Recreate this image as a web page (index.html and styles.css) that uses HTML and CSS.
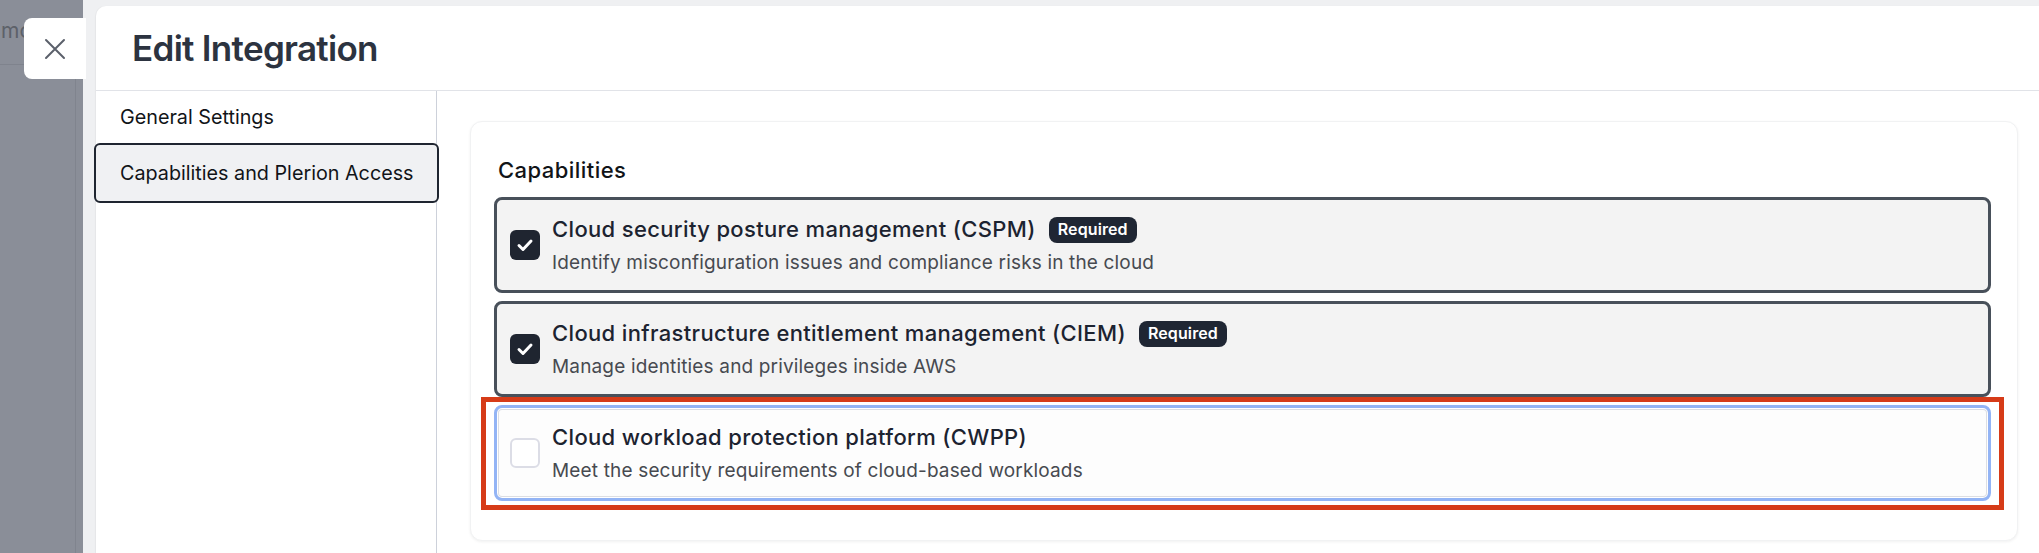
FILE: index.html
```html
<!DOCTYPE html>
<html lang="en">
<head>
<meta charset="utf-8">
<title>Edit Integration</title>
<link rel="stylesheet" href="styles.css">
</head>
<body>
<div class="screen">
  <div class="backdrop">
    <div class="backdrop-top"><span class="peek">mo</span></div>
    <div class="backdrop-body"></div>
    <button class="close-btn" aria-label="Close">
      <svg width="22" height="22" viewBox="0 0 22 22"><path d="M2 2 L20 20 M20 2 L2 20" stroke="#5b606b" stroke-width="2" stroke-linecap="round" fill="none"/></svg>
    </button>
  </div>
  <div class="sheet">
    <div class="panel">
      <header class="panel-header">
        <h1 class="panel-title">Edit Integration</h1>
      </header>
      <div class="panel-body">
        <nav class="side-nav">
          <div class="nav-item">General Settings</div>
          <div class="nav-item nav-item-active">Capabilities and Plerion Access</div>
        </nav>
        <main class="content">
          <section class="card">
            <h2 class="card-title">Capabilities</h2>
            <div class="cap-list">
              <div class="cap cap-checked">
                <span class="checkbox checkbox-on">
                  <svg width="30" height="30" viewBox="0 0 30 30"><path d="M9 15.5 L13 19.5 L21 11" stroke="#fff" stroke-width="3" stroke-linecap="round" stroke-linejoin="round" fill="none"/></svg>
                </span>
                <div class="cap-text">
                  <div class="cap-name">Cloud security posture management (CSPM) <span class="badge">Required</span></div>
                  <div class="cap-desc">Identify misconfiguration issues and compliance risks in the cloud</div>
                </div>
              </div>
              <div class="cap cap-checked">
                <span class="checkbox checkbox-on">
                  <svg width="30" height="30" viewBox="0 0 30 30"><path d="M9 15.5 L13 19.5 L21 11" stroke="#fff" stroke-width="3" stroke-linecap="round" stroke-linejoin="round" fill="none"/></svg>
                </span>
                <div class="cap-text">
                  <div class="cap-name">Cloud infrastructure entitlement management (CIEM) <span class="badge">Required</span></div>
                  <div class="cap-desc">Manage identities and privileges inside AWS</div>
                </div>
              </div>
              <div class="cap cap-focus">
                <span class="checkbox"></span>
                <div class="cap-text">
                  <div class="cap-name">Cloud workload protection platform (CWPP)</div>
                  <div class="cap-desc">Meet the security requirements of cloud-based workloads</div>
                </div>
                <span class="highlight"></span>
              </div>
            </div>
          </section>
        </main>
      </div>
    </div>
  </div>
</div>
</body>
</html>
```
FILE: styles.css
```css
* { box-sizing: border-box; }
html, body { margin: 0; padding: 0; }
body {
  width: 2039px;
  height: 553px;
  overflow: hidden;
  font-family: Inter, "Liberation Sans", sans-serif;
  background: #eff0f2;
}
.screen {
  display: flex;
  width: 2039px;
  height: 553px;
}
.backdrop {
  position: relative;
  width: 83px;
  flex: none;
  background: #8a8e98;
  display: flex;
  flex-direction: column;
}
.backdrop-top {
  height: 65px;
  border-bottom: 1px solid #7f838d;
  width: 75px;
  overflow: hidden;
  white-space: nowrap;
}
.peek {
  display: block;
  margin: 19px 0 0 1px;
  font-size: 21px;
  line-height: 24px;
  color: #5d6169;
}
.backdrop-body {
  flex: 1;
  width: 76px;
  border-right: 1px solid #80848e;
}
.close-btn {
  position: absolute;
  left: 24px;
  top: 18px;
  width: 62px;
  height: 61px;
  border: 0;
  padding: 0;
  background: #ffffff;
  border-radius: 8px 0 0 8px;
  display: flex;
  align-items: center;
  justify-content: center;
  z-index: 2;
}
.sheet {
  flex: 1;
  padding: 6px 0 0 13px;
  display: flex;
}
.panel {
  flex: 1;
  background: #ffffff;
  border-top-left-radius: 10px;
  box-shadow: -1px 0 1px rgba(0,0,0,0.04);
  display: flex;
  flex-direction: column;
}
.panel-header {
  height: 85px;
  border-bottom: 1px solid #e1e3e8;
  display: flex;
  align-items: center;
  padding-left: 36px;
}
.panel-title {
  margin: 0;
  font-size: 35px;
  font-weight: 600;
  color: #2c3340;
  letter-spacing: -0.7px;
}
.panel-body {
  flex: 1;
  display: flex;
}
.side-nav {
  width: 341px;
  flex: none;
  border-right: 1px solid #cdd1da;
  display: flex;
  flex-direction: column;
}
.nav-item {
  height: 52px;
  display: flex;
  align-items: center;
  padding-left: 24px;
  font-size: 19.75px;
  color: #111418;
}
.nav-item-active {
  height: 60px;
  margin: 0 -3px 0 -2px;
  padding-left: 24px;
  border: 2px solid #1f2530;
  border-radius: 6px;
  background: #f0f1f3;
}
.content {
  flex: 1;
  padding: 30px 21px 12px 33px;
  display: flex;
  flex-direction: column;
}
.card {
  flex: 1;
  background: #ffffff;
  border: 1px solid #f1f2f3;
  border-radius: 12px;
  box-shadow: 0 1px 3px rgba(0,0,0,0.06);
  padding: 34px 26px 0 23px;
}
.card-title {
  margin: 0 0 13px 4px;
  font-size: 22px;
  line-height: 28px;
  font-weight: 500;
  letter-spacing: 0.45px;
  color: #111418;
}
.cap-list {
  display: flex;
  flex-direction: column;
  gap: 8px;
}
.cap {
  position: relative;
  height: 96px;
  display: flex;
  align-items: center;
  gap: 12px;
  padding: 0 0 0 13px;
  border-radius: 8px;
}
.cap-checked {
  background: #f3f3f3;
  border: 3px solid #48505a;
}
.cap-focus {
  background: #fdfdfd;
  border: 3px solid #93b4f5;
  box-shadow: inset 0 0 0 1px #ffffff, inset 0 0 0 2px #dcdee3;
}
.checkbox {
  width: 30px;
  height: 30px;
  flex: none;
  border-radius: 6px;
  border: 2px solid #dcdde6;
  background: #ffffff;
  display: flex;
}
.checkbox-on {
  border: 0;
  background: #1f2530;
}
.cap-text {
  display: flex;
  flex-direction: column;
  padding-top: 2px;
}
.cap-name {
  font-size: 22px;
  line-height: 33px;
  font-weight: 500;
  letter-spacing: 0.35px;
  color: #1c2330;
  display: flex;
  align-items: center;
  gap: 13px;
}
.badge {
  display: inline-flex;
  align-items: center;
  height: 26px;
  padding: 0 9px;
  border-radius: 8px;
  background: #1f2633;
  color: #ffffff;
  font-size: 16px;
  font-weight: 600;
  letter-spacing: 0.1px;
}
.cap-desc {
  font-size: 19px;
  line-height: 33px;
  letter-spacing: 0.16px;
  color: #474a50;
}
.highlight {
  position: absolute;
  left: -16px;
  top: -11px;
  right: -16px;
  bottom: -12px;
  border: 5px solid #d63b18;
  pointer-events: none;
}
```
